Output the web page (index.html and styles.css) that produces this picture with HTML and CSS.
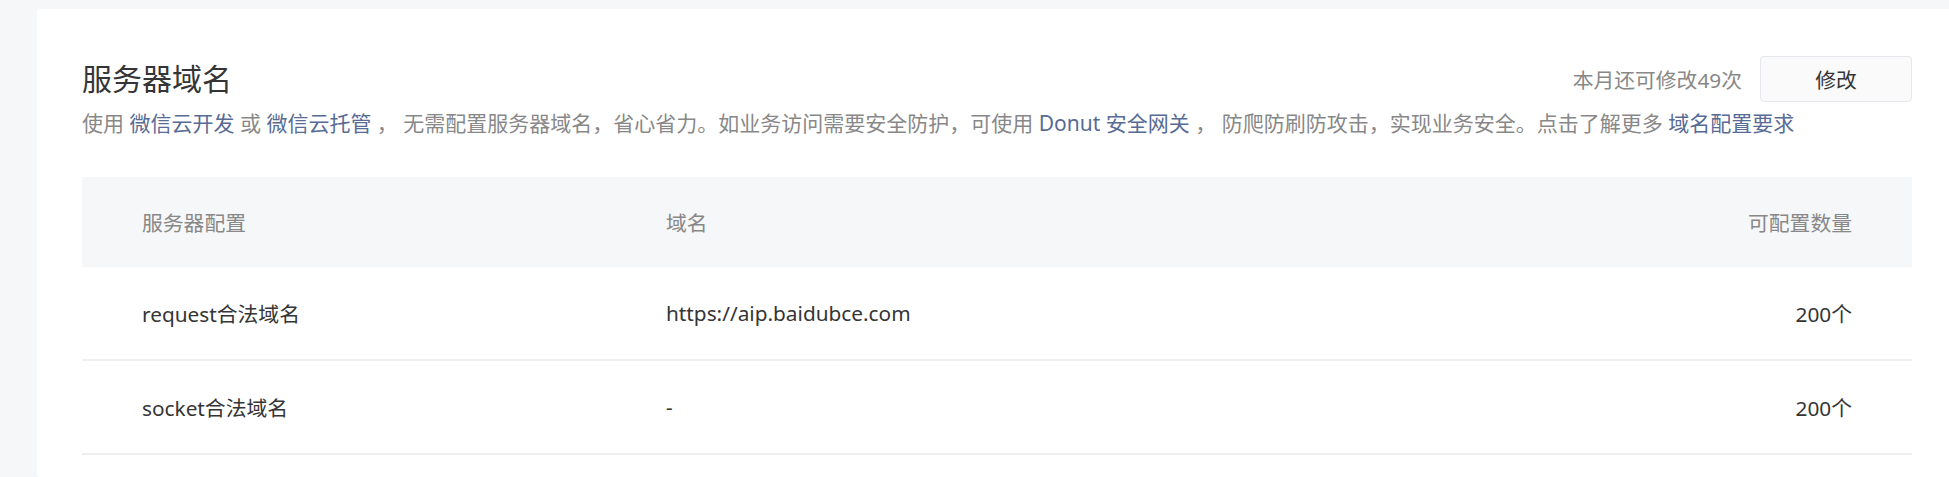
FILE: index.html
```html
<!DOCTYPE html>
<html lang="zh-CN">
<head>
<meta charset="utf-8">
<title>服务器域名</title>
<link rel="stylesheet" href="styles.css">
</head>
<body>
<div class="card">
  <div class="head">
    <h2 class="title">服务器域名</h2>
    <div class="actions">
      <span class="quota">本月还可修改49次</span>
      <button class="btn" type="button">修改</button>
    </div>
  </div>
  <p class="desc">使用 <a class="link">微信云开发</a> 或 <a class="link">微信云托管</a> ， 无需配置服务器域名，省心省力。如业务访问需要安全防护，可使用 <a class="link">Donut 安全网关</a> ， 防爬防刷防攻击，实现业务安全。点击了解更多 <a class="link">域名配置要求</a></p>
  <div class="table">
    <div class="row row-head">
      <div class="cell">服务器配置</div>
      <div class="cell">域名</div>
      <div class="cell num">可配置数量</div>
    </div>
    <div class="row">
      <div class="cell">request合法域名</div>
      <div class="cell">https://aip.baidubce.com</div>
      <div class="cell num">200个</div>
    </div>
    <div class="row">
      <div class="cell">socket合法域名</div>
      <div class="cell">-</div>
      <div class="cell num">200个</div>
    </div>
  </div>
</div>
</body>
</html>
```

FILE: styles.css
```css
html, body {
  margin: 0;
  padding: 0;
  overflow: hidden;
}
body {
  background: #f6f7f9;
  font-family: "Noto Sans", "Noto Sans CJK SC", sans-serif;
  color: #353535;
  height: 477px;
}
.card {
  box-sizing: border-box;
  background: #ffffff;
  margin: 9px -8px 0 37px;
  padding: 47px 45px 0 45px;
  border-radius: 4px;
  height: 468px;
}
.head {
  display: flex;
  align-items: center;
  justify-content: space-between;
  height: 46px;
}
.title {
  margin: 0;
  font-size: 30px;
  font-weight: 400;
  line-height: 46px;
  color: #353535;
}
.actions {
  display: flex;
  align-items: center;
  gap: 18px;
}
.quota {
  font-size: 20.8px;
  color: #888888;
}
.btn {
  width: 152px;
  height: 46px;
  border: 1px solid #e4e7eb;
  border-radius: 4px;
  background: #fafafa;
  color: #353535;
  font-family: inherit;
  font-size: 20.8px;
  padding: 0;
}
.desc {
  margin: 7px 0 0 0;
  font-size: 21px;
  line-height: 28px;
  color: #888888;
  white-space: nowrap;
}
.link {
  color: #576b95;
  text-decoration: none;
}
.table {
  margin-top: 40px;
}
.row {
  display: grid;
  grid-template-columns: 524px 1fr auto;
  align-items: center;
  height: 92px;
  border-bottom: 2px solid #eeeeee;
  font-size: 20.8px;
  color: #353535;
}
.row-head {
  height: 90px;
  border-bottom: none;
  background: #f6f7f9;
  color: #888888;
}
.cell {
  padding: 0 60px;
  white-space: nowrap;
}
.num {
  text-align: right;
}
```
